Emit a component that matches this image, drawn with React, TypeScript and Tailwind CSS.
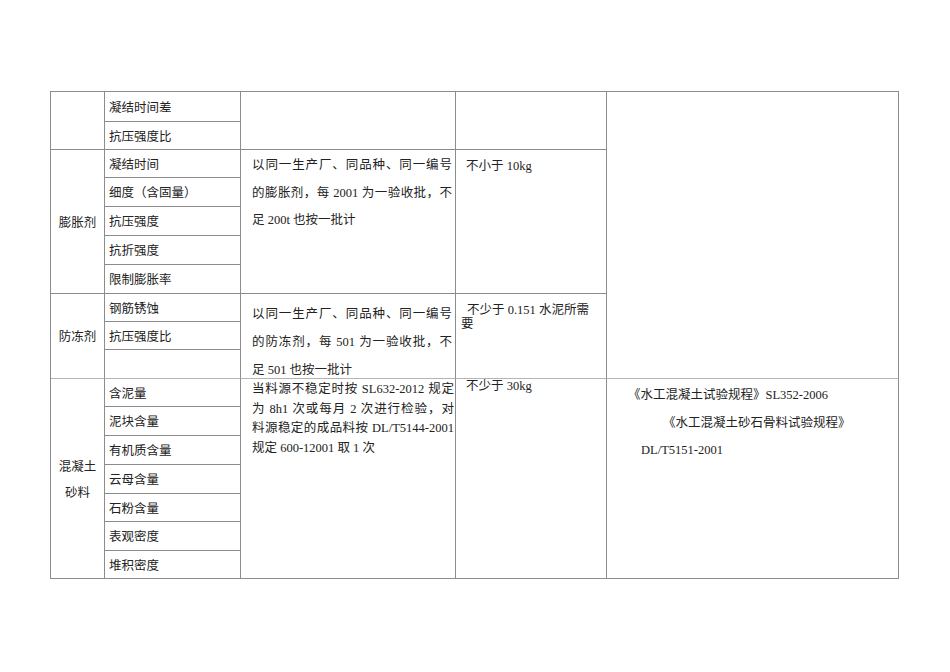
const rowHeights = [30, 28, 28, 29, 29, 29, 29, 28, 28, 29, 28, 29, 29, 29, 28, 29, 28];

const items = [
  "凝结时间差",
  "抗压强度比",
  "凝结时间",
  "细度（含固量）",
  "抗压强度",
  "抗折强度",
  "限制膨胀率",
  "钢筋锈蚀",
  "抗压强度比",
  "",
  "含泥量",
  "泥块含量",
  "有机质含量",
  "云母含量",
  "石粉含量",
  "表观密度",
  "堆积密度",
];

const rowStart = [
  "row-start-1", "row-start-2", "row-start-3", "row-start-4", "row-start-5", "row-start-6",
  "row-start-7", "row-start-8", "row-start-9", "row-start-10", "row-start-11", "row-start-12",
  "row-start-13", "row-start-14", "row-start-15", "row-start-16", "row-start-17",
];

const cell = "border-r border-b border-[#8c8c8c]";
const sep = "border-r border-b border-r-[#8c8c8c] border-b-[#b4b4b4]";

function JLine({ children }: { children: React.ReactNode }) {
  return <div className="text-justify [text-align-last:justify]">{children}</div>;
}

export default function App() {
  return (
    <div
      className="w-[950px] min-h-[672px] bg-white text-[#222] text-[12.5px] pt-[91px] pl-[50px]"
      style={{ fontFamily: '"Liberation Serif", "Noto Sans CJK SC", serif' }}
    >
      <div
        className="grid w-[849px] border-l border-t border-[#8c8c8c] grid-cols-[54px_136px_215px_151px_292px]"
        style={{ gridTemplateRows: rowHeights.map((h) => `${h}px`).join(" ") }}
      >
        {/* column 1 */}
        <div className={`${cell} col-start-1 row-start-1 row-span-2`} />
        <div className={`${cell} col-start-1 row-start-3 row-span-5 flex items-center justify-center pt-[3px]`}>
          膨胀剂
        </div>
        <div className={`${sep} col-start-1 row-start-8 row-span-3 flex items-center justify-center pt-[3px]`}>
          防冻剂
        </div>
        <div className={`${cell} col-start-1 row-start-11 row-span-7 flex flex-col items-center justify-center pt-[3px] leading-[26px]`}>
          <div>混凝土</div>
          <div>砂料</div>
        </div>

        {/* column 2 */}
        {items.map((t, i) => (
          <div
            key={i}
            className={`${i === 9 ? sep : cell} col-start-2 ${rowStart[i]} flex items-center pl-[4px] pt-[3px]`}
          >
            {t}
          </div>
        ))}

        {/* column 3 */}
        <div className={`${cell} col-start-3 row-start-1 row-span-2`} />
        <div className={`${cell} col-start-3 row-start-3 row-span-5 pl-[11px] pr-[3px] pt-[2px] leading-[27.5px]`}>
          <JLine>以同一生产厂、同品种、同一编号</JLine>
          <JLine>的膨胀剂，每 2001 为一验收批，不</JLine>
          <div>足 200t 也按一批计</div>
        </div>
        <div className={`${sep} col-start-3 row-start-8 row-span-3 pl-[11px] pr-[3px] pt-[6px] leading-[28px]`}>
          <JLine>以同一生产厂、同品种、同一编号</JLine>
          <JLine>的防冻剂，每 501 为一验收批，不</JLine>
          <div>足 501 也按一批计</div>
        </div>
        <div className={`${cell} col-start-3 row-start-11 row-span-7 pl-[11px] pr-[1px] pt-[1px] leading-[19.5px]`}>
          <JLine>当料源不稳定时按 SL632-2012 规定</JLine>
          <JLine>为 8h1 次或每月 2 次进行检验，对</JLine>
          <JLine>料源稳定的成品料按 DL/T5144-2001</JLine>
          <div>规定 600-12001 取 1 次</div>
        </div>

        {/* column 4 */}
        <div className={`${cell} col-start-4 row-start-1 row-span-2`} />
        <div className={`${cell} col-start-4 row-start-3 row-span-5 pl-[10px] pt-[8px] leading-[16px]`}>
          不小于 10kg
        </div>
        <div className={`${sep} col-start-4 row-start-8 row-span-3 pl-[5px] pt-[9px] leading-[14px]`}>
          <div className="pl-[6px]">不少于 0.151 水泥所需</div>
          <div>要</div>
        </div>
        <div className={`${cell} col-start-4 row-start-11 row-span-7 pl-[10px] leading-[14px]`}>
          不少于 30kg
        </div>

        {/* column 5 */}
        <div className={`${sep} col-start-5 row-start-1 row-span-10`} />
        <div className={`${cell} col-start-5 row-start-11 row-span-7 pt-[3px] leading-[27.5px]`}>
          <div className="pl-[21px]">《水工混凝土试验规程》SL352-2006</div>
          <div className="pl-[56px]">《水工混凝土砂石骨料试验规程》</div>
          <div className="pl-[34px]">DL/T5151-2001</div>
        </div>
      </div>
    </div>
  );
}
